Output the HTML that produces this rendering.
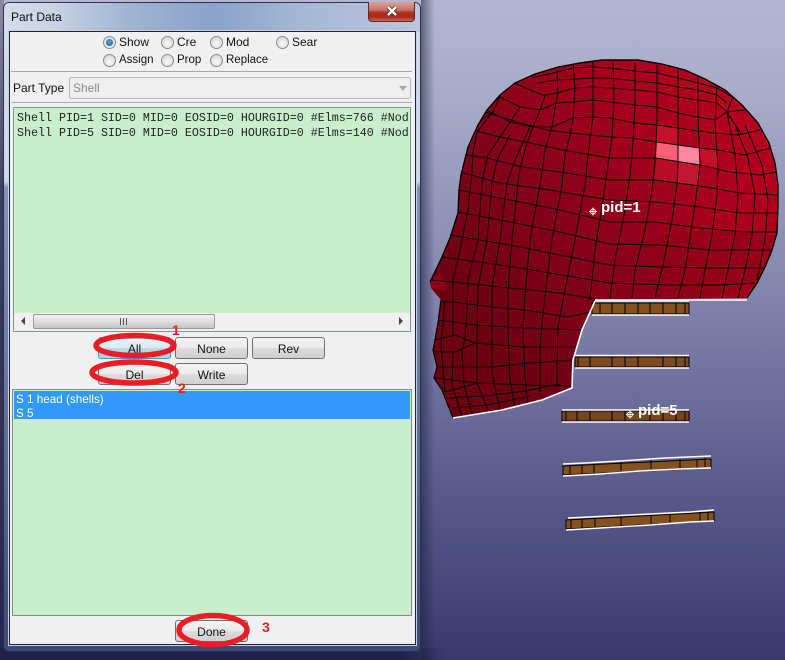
<!DOCTYPE html>
<html><head><meta charset="utf-8"><style>
html,body{margin:0;padding:0}
body{width:785px;height:660px;overflow:hidden;position:relative;background:linear-gradient(180deg,#b4b6d2 0,#a8aac8 15%,#8284ab 45%,#5f6090 70%,#39396f 100%);font-family:"Liberation Sans",sans-serif;font-size:12px;color:#111}
.a{position:absolute}
.r{position:absolute;width:11px;height:11px;border-radius:50%;border:1px solid #8a8a8a;background:radial-gradient(circle at 50% 60%,#fafafa,#d0d0d0);box-sizing:content-box}
.r.on:after{content:"";position:absolute;left:2px;top:2px;width:7px;height:7px;border-radius:50%;background:radial-gradient(circle at 50% 40%,#4fb0e0,#0d4f86)}
.l{position:absolute;white-space:nowrap;line-height:14px}
.b{position:absolute;height:22px;width:73px;box-sizing:border-box;border:1px solid #707070;border-radius:3px;background:linear-gradient(180deg,#f3f3f3 0,#ebebeb 48%,#dcdcdc 52%,#cfcfcf 100%);text-align:center;line-height:22px;color:#111}
.m{position:absolute;font-family:"Liberation Mono",monospace;font-size:11.67px;line-height:15px;white-space:pre;color:#222}
</style></head><body>

<div class="a" style="left:0;top:0;width:4px;height:660px;background:linear-gradient(180deg,#8a8aa0 0,#3e3e5c 30%,#26264e 100%)"></div>
<div class="a" style="left:0;top:648px;width:445px;height:12px;background:linear-gradient(90deg,#20204a 0,#20204a 90%,rgba(32,32,74,0) 100%)"></div>
<div class="a" style="left:421px;top:0;width:14px;height:660px;background:linear-gradient(90deg,rgba(30,30,60,.55),rgba(30,30,60,0))"></div>

<svg class="a" style="left:0;top:0" width="785" height="660" viewBox="0 0 785 660">
<defs>
<clipPath id="h"><path d="M430 282L442 257 450 238 458 213 459 190 461 175 468 147 478 125 487 110 500 95 515 83 535 74 558 67 580 63 602 60 638 60 662 64 685 70 705 79 725 90 742 105 758 123 769 143 775 163 778 185 778 205 777 233 772 250 765 267 757 283 747 298 595 300 582 330 573 360 572 388 542 400 502 410 453 418 447 405 442 390 434 378 437 367 433 350 438 323 441 300 431 288Z"/></clipPath>
<linearGradient id="g" gradientUnits="userSpaceOnUse" x1="450" y1="300" x2="720" y2="100"><stop offset="0" stop-color="#6c0010"/><stop offset=".4" stop-color="#85001a"/><stop offset=".75" stop-color="#a4001c"/><stop offset="1" stop-color="#b4001f"/></linearGradient>
</defs>
<path d="M430 282L442 257 450 238 458 213 459 190 461 175 468 147 478 125 487 110 500 95 515 83 535 74 558 67 580 63 602 60 638 60 662 64 685 70 705 79 725 90 742 105 758 123 769 143 775 163 778 185 778 205 777 233 772 250 765 267 757 283 747 298 595 300 582 330 573 360 572 388 542 400 502 410 453 418 447 405 442 390 434 378 437 367 433 350 438 323 441 300 431 288Z" fill="url(#g)"/>
<g clip-path="url(#h)">
<path d="M430 282L440 273 447 285 446 291 431 288Z" fill="#8f0016"/>
<path d="M700 230L778 235 760 285 700 298 590 300 600 250Z" fill="#8a0016" opacity=".5"/>
<path d="M657 124L678 127 678 145 657 142Z" fill="#c4102c"/>
<path d="M657 142L678 145 678 162 656 158Z" fill="#ff6078"/>
<path d="M678 145L700 148 700 165 678 162Z" fill="#ff86a0"/>
<path d="M700 148L718 150 718 168 700 165Z" fill="#c40e2a"/>
<path d="M656 158L678 162 678 183 655 180Z" fill="#b80c28"/>
<path d="M678 162L700 165 699 186 678 183Z" fill="#c01832"/>
<g fill="none" stroke="#0a0005" stroke-width="1" stroke-linejoin="round">
<!-- rows -->
<path d="M532 78L553 73 573 68 593 67 610 68 635 71 657 73 678 78 698 83 717 88 732 97"/>
<path d="M537 83L557 80 575 79 593 78 610 78 635 81 657 83 678 87 698 90 717 95 727 103"/>
<path d="M545 95L557 93 575 88 593 87 610 88 635 90 657 92 678 97 698 100 717 103 727 112 745 110"/>
<path d="M500 97L520 107 540 110 557 103 573 102 593 100 610 102 635 105 657 107 678 113 698 117 715 120 727 112"/>
<path d="M545 96L530 90 515 83"/>
<path d="M610 118L593 117 573 118 552 127 533 127 510 122 487 110"/>
<path d="M610 118L635 123 657 125 678 128 698 131 715 133 738 135 760 130"/>
<path d="M485 112L517 122 547 130 570 133 610 137 633 138 657 142 678 145 700 148 718 150 745 155 770 148"/>
<path d="M473 130L500 137 530 143 563 150 610 158 656 158 700 165 730 172 760 175 776 172"/>
<path d="M465 155L487 158 523 167 567 173 610 180 655 180 700 186 740 193 778 195"/>
<path d="M460 172L500 183 550 190 610 200 655 202 700 207 740 213 778 213"/>
<path d="M459 190L510 200 560 210 610 222 655 222 700 228 745 232 778 232"/>
<path d="M458 212L510 222 560 232 610 244 660 245 710 250 772 250"/>
<path d="M450 235L510 245 560 255 610 265 660 267 710 268 765 268"/>
<path d="M442 257L500 265 550 273 610 283 670 285 720 285 755 283"/>
<path d="M432 280L500 287 560 293 595 299"/>
<path d="M442 302L453 302 492 307 525 310 568 317 590 312"/>
<path d="M438 320L475 325 525 328 582 330"/>
<path d="M435 340L455 335 475 343 525 347 577 347"/>
<path d="M433 352L455 352 475 343"/>
<path d="M435 367L492 367 530 363 573 360"/>
<path d="M435 378L478 383 525 385 572 386"/>
<path d="M445 392L478 383"/>
<path d="M447 398L485 396 525 391 560 384"/>
<path d="M452 408L488 405 530 396"/>
<!-- cols -->
<path d="M593 62L593 88 593 117 590 138 587 165 585 185 575 240 563 300 558 327 557 367 557 387"/>
<path d="M573 63L575 88 573 118 570 135 565 155 563 175 562 185 552 240 547 280 543 313 540 347 540 392"/>
<path d="M557 70L558 93 556 103 552 127 545 150 542 172 540 185 530 240 525 295 523 330 525 377 528 403"/>
<path d="M545 96L540 110 533 127 527 143 520 168 518 183 512 240 508 290 508 330 510 380 515 408"/>
<path d="M530 127L515 160 507 183 500 240 492 287 492 323 492 373 500 410"/>
<path d="M510 135L497 160 492 183 487 240 478 287 477 340 477 383 488 410"/>
<path d="M520 107L510 122 500 137 488 155 482 182 478 240 468 280 467 313 465 337"/>
<path d="M500 97L492 113 477 132 473 152 472 172 468 210 460 250 453 280 453 335"/>
<path d="M492 113L478 122"/>
<path d="M613 63L614 98 612 138 608 165 603 200 595 250 590 300"/>
<path d="M635 63L635 105 633 142 630 175 625 210 615 260 610 298"/>
<path d="M657 65L657 122 655 162 652 190 645 230 635 270 632 298"/>
<path d="M678 70L678 115 678 162 677 185 672 220 663 265 655 298"/>
<path d="M698 75L698 118 700 165 697 190 692 225 685 270 678 298"/>
<path d="M717 83L715 122 718 168 717 195 712 235 705 270 700 298"/>
<path d="M727 112L735 155 738 195 735 235 728 270 722 298"/>
<path d="M735 125L748 158 755 195 752 235 745 270 738 298"/>
<path d="M745 125L762 165 768 200 765 240 757 280"/>
<path d="M727 112L742 135"/>
<path d="M734 94L727 112"/>
<path d="M445 300L441 345 445 392M465 337L462 352 464 385 472 414M453 352L452 385 462 416"/>
</g>
</g>
<path d="M430 282L442 257 450 238 458 213 459 190 461 175 468 147 478 125 487 110 500 95 515 83 535 74 558 67 580 63 602 60 638 60 662 64 685 70 705 79 725 90 742 105 758 123 769 143 775 163 778 185 778 205 777 233 772 250 765 267 757 283 747 298" fill="none" stroke="#050003" stroke-width="1.400"/>
<path d="M441 300L438 323 433 350 437 367 434 378 442 390 453 418" fill="none" stroke="#050003" stroke-width="1.200"/>

<!-- sticks -->
<g stroke="#000" stroke-width="1">
<path d="M592 303H689V314H592Z" fill="#85521f"/>
<path d="M575 357H689V367H575Z" fill="#7e4c20"/>
<path d="M562 411H689V421H562Z" fill="#764620"/>
<path d="M563 466L711 459V468L563 475Z" fill="#85521f"/>
<path d="M566 520L714 512V521L566 529Z" fill="#85521f"/>
</g>
<g fill="none" stroke="#000" stroke-width="1">
<path d="M612 303v11M625 303v11M638 303v11M650 303v11M663 303v11M676 303v11M685 303v11M600 303v11"/>
<path d="M590 357v10M612 357v10M625 357v10M638 357v10M663 357v10M676 357v10M685 357v10M578 357v10"/>
<path d="M566 411v10M577 411v10M590 411v10M612 411v10M625 411v10M650 411v10M663 411v10M676 411v10M685 411v10"/>
<path d="M570 466v9M582 465v9M594 465v9M621 462v9M651 460v9M680 459v9M697 459v9M705 458v9"/>
<path d="M571 520v9M582 519v9M595 519v9M621 517v9M651 515v9M670 514v9M700 512v9M708 512v9"/>
</g>
<g fill="none" stroke="#fff" stroke-width="1.400">
<path d="M595 301H689M592 315H689"/>
<path d="M575 355.500H689M575 368H689"/>
<path d="M562 410H689M562 422H689"/>
<path d="M563 464L585 463 620 461 665 458 711 456M563 476L600 474 640 471 680 469 711 468"/>
<path d="M568 518L610 516 650 514 690 512 714 510M566 530L600 528 650 525 690 522 714 521"/>
<path d="M595 300H747M595 301L582 330 573 360 572 388 542 400 502 410 453 418" stroke-width="1.600"/>
</g>
<g stroke="#fff" fill="none" stroke-width="1"><circle cx="593" cy="211.500" r="2.500"/><path d="M589 211.500H597M593 207.500V215.500"/><circle cx="630" cy="414.500" r="2.500"/><path d="M626 414.500H634M630 410.500V418.500"/></g>
<text x="601" y="212" font-family="Liberation Sans,sans-serif" font-size="15" font-weight="bold" fill="#fff">pid=1</text>
<text x="638" y="415" font-family="Liberation Sans,sans-serif" font-size="15" font-weight="bold" fill="#fff">pid=5</text>
</svg>

<!-- window -->
<div class="a" style="left:3px;top:2px;width:418px;height:650px;box-sizing:border-box;border:1px solid #2a3050;border-radius:6px;background:linear-gradient(180deg,#d4deec 0,#ccd8e8 27.500%,#7f93bb 28.500%,#6a7ca8 55%,#46537f 90%,#3c4a78 100%)"></div>
<div class="a" style="left:4px;top:3px;width:416px;height:29px;border-radius:5px 5px 0 0;background:linear-gradient(90deg,#d4dcea 0,#c8d3e4 12%,#a0b4d2 30%,#8aa3c9 50%,#a9bad6 75%,#b8c5dc 100%)"></div>
<div class="a" style="left:11px;top:10px;line-height:15px;font-size:12px;color:#0a0a0a">Part Data</div>
<div class="a" style="left:368px;top:2px;width:47px;height:20px;box-sizing:border-box;border:1px solid #5a2a28;border-top:0;border-radius:0 0 4px 4px;background:linear-gradient(180deg,#dca198 0,#c8766c 40%,#b03020 55%,#a82a20 80%,#cc6a50 100%)"></div>
<svg class="a" style="left:385px;top:5px" width="14" height="12"><path d="M3 2L11 10M11 2L3 10" stroke="#4a2a2a" stroke-width="4"/><path d="M3 2L11 10M11 2L3 10" stroke="#fff" stroke-width="2.400"/></svg>

<div class="a" style="left:9px;top:31px;width:407px;height:614px;box-sizing:border-box;border:1px solid #1c2238;background:#f0f0f0;box-shadow:0 0 0 1px #c8d0de"></div>

<div class="r on" style="left:103px;top:36px"></div><div class="l" style="left:119px;top:35px">Show</div>
<div class="r" style="left:161px;top:36px"></div><div class="l" style="left:177px;top:35px">Cre</div>
<div class="r" style="left:210px;top:36px"></div><div class="l" style="left:226px;top:35px">Mod</div>
<div class="r" style="left:276px;top:36px"></div><div class="l" style="left:292px;top:35px">Sear</div>
<div class="r" style="left:103px;top:54px"></div><div class="l" style="left:119px;top:53px;font-size:11.5px">Assign</div>
<div class="r" style="left:161px;top:54px"></div><div class="l" style="left:177px;top:53px;font-size:11.5px">Prop</div>
<div class="r" style="left:210px;top:54px"></div><div class="l" style="left:226px;top:53px;font-size:11.5px">Replace</div>

<div class="a" style="left:11px;top:71px;width:401px;height:1px;background:#a8a8a8"></div>
<div class="l" style="left:13px;top:81px">Part Type</div>
<div class="a" style="left:69px;top:77px;width:342px;height:22px;box-sizing:border-box;border:1px solid #b8b8b8;border-radius:3px;background:#efefef;color:#8a8a8a;padding-left:3px;line-height:20px">Shell</div>
<svg class="a" style="left:398px;top:86px" width="10" height="6"><path d="M1 0H9L5 5Z" fill="#a8a8a8"/></svg>
<div class="a" style="left:12px;top:102px;width:400px;height:1px;background:#a8a8a8"></div>

<div class="a" style="left:13px;top:107px;width:398px;height:225px;box-sizing:border-box;border:1px solid #7d9a88;background:#c8eecb"></div>
<div class="m" style="left:17px;top:111px;width:392px;overflow:hidden">Shell PID=1 SID=0 MID=0 EOSID=0 HOURGID=0 #Elms=766 #Nod
Shell PID=5 SID=0 MID=0 EOSID=0 HOURGID=0 #Elms=140 #Nod</div>
<div class="a" style="left:14px;top:313px;width:396px;height:18px;background:#f0f0f0;border-top:1px solid #e8f4e8;box-sizing:border-box"></div>
<div class="a" style="left:33px;top:314px;width:182px;height:15px;box-sizing:border-box;border:1px solid #9a9a9a;border-radius:2px;background:linear-gradient(180deg,#f2f2f2,#dedede 50%,#c4c4c4)"></div>
<svg class="a" style="left:119px;top:318px" width="10" height="7"><path d="M1.500 0v7M4.500 0v7M7.500 0v7" stroke="#555"/></svg>
<svg class="a" style="left:19px;top:317px" width="8" height="9"><path d="M6 0V8L2 4Z" fill="#444"/></svg>
<svg class="a" style="left:397px;top:317px" width="8" height="9"><path d="M2 0V8L6 4Z" fill="#444"/></svg>

<div class="b" style="left:98px;top:337px;border-color:#3a9cd0;background:linear-gradient(180deg,#e8f3f9,#d8ebf4 48%,#b9d9e8 52%,#a9cfe2);box-shadow:inset 0 0 0 1px #9fe0f8">All</div>
<div class="b" style="left:175px;top:337px">None</div>
<div class="b" style="left:252px;top:337px">Rev</div>
<div class="b" style="left:98px;top:363px">Del</div>
<div class="b" style="left:175px;top:363px">Write</div>

<div class="a" style="left:12px;top:389px;width:400px;height:227px;box-sizing:border-box;border:1px solid #7e8e84;background:#c8eecb"></div>
<div class="a" style="left:14px;top:391px;width:396px;height:28px;background:#3399ff"></div>
<div class="l" style="left:16px;top:393px;color:#fff;font-size:11.7px">S 1 head (shells)</div>
<div class="l" style="left:16px;top:407px;color:#fff;font-size:11.7px">S 5</div>

<div class="b" style="left:175px;top:620px">Done</div>

<svg class="a" style="left:0;top:0" width="785" height="660">
<g fill="none" stroke="#ed1c24" stroke-width="5.500">
<ellipse cx="135" cy="345.500" rx="39" ry="10"/>
<ellipse cx="134" cy="372.500" rx="42" ry="10.500"/>
<ellipse cx="213" cy="630" rx="34" ry="14.500"/>
</g>
<g fill="#ed1c24" font-family="Liberation Sans,sans-serif" font-size="14" font-weight="bold">
<text x="172" y="335">1</text><text x="178" y="393">2</text><text x="262" y="632">3</text>
</g>
</svg>
</body></html>
